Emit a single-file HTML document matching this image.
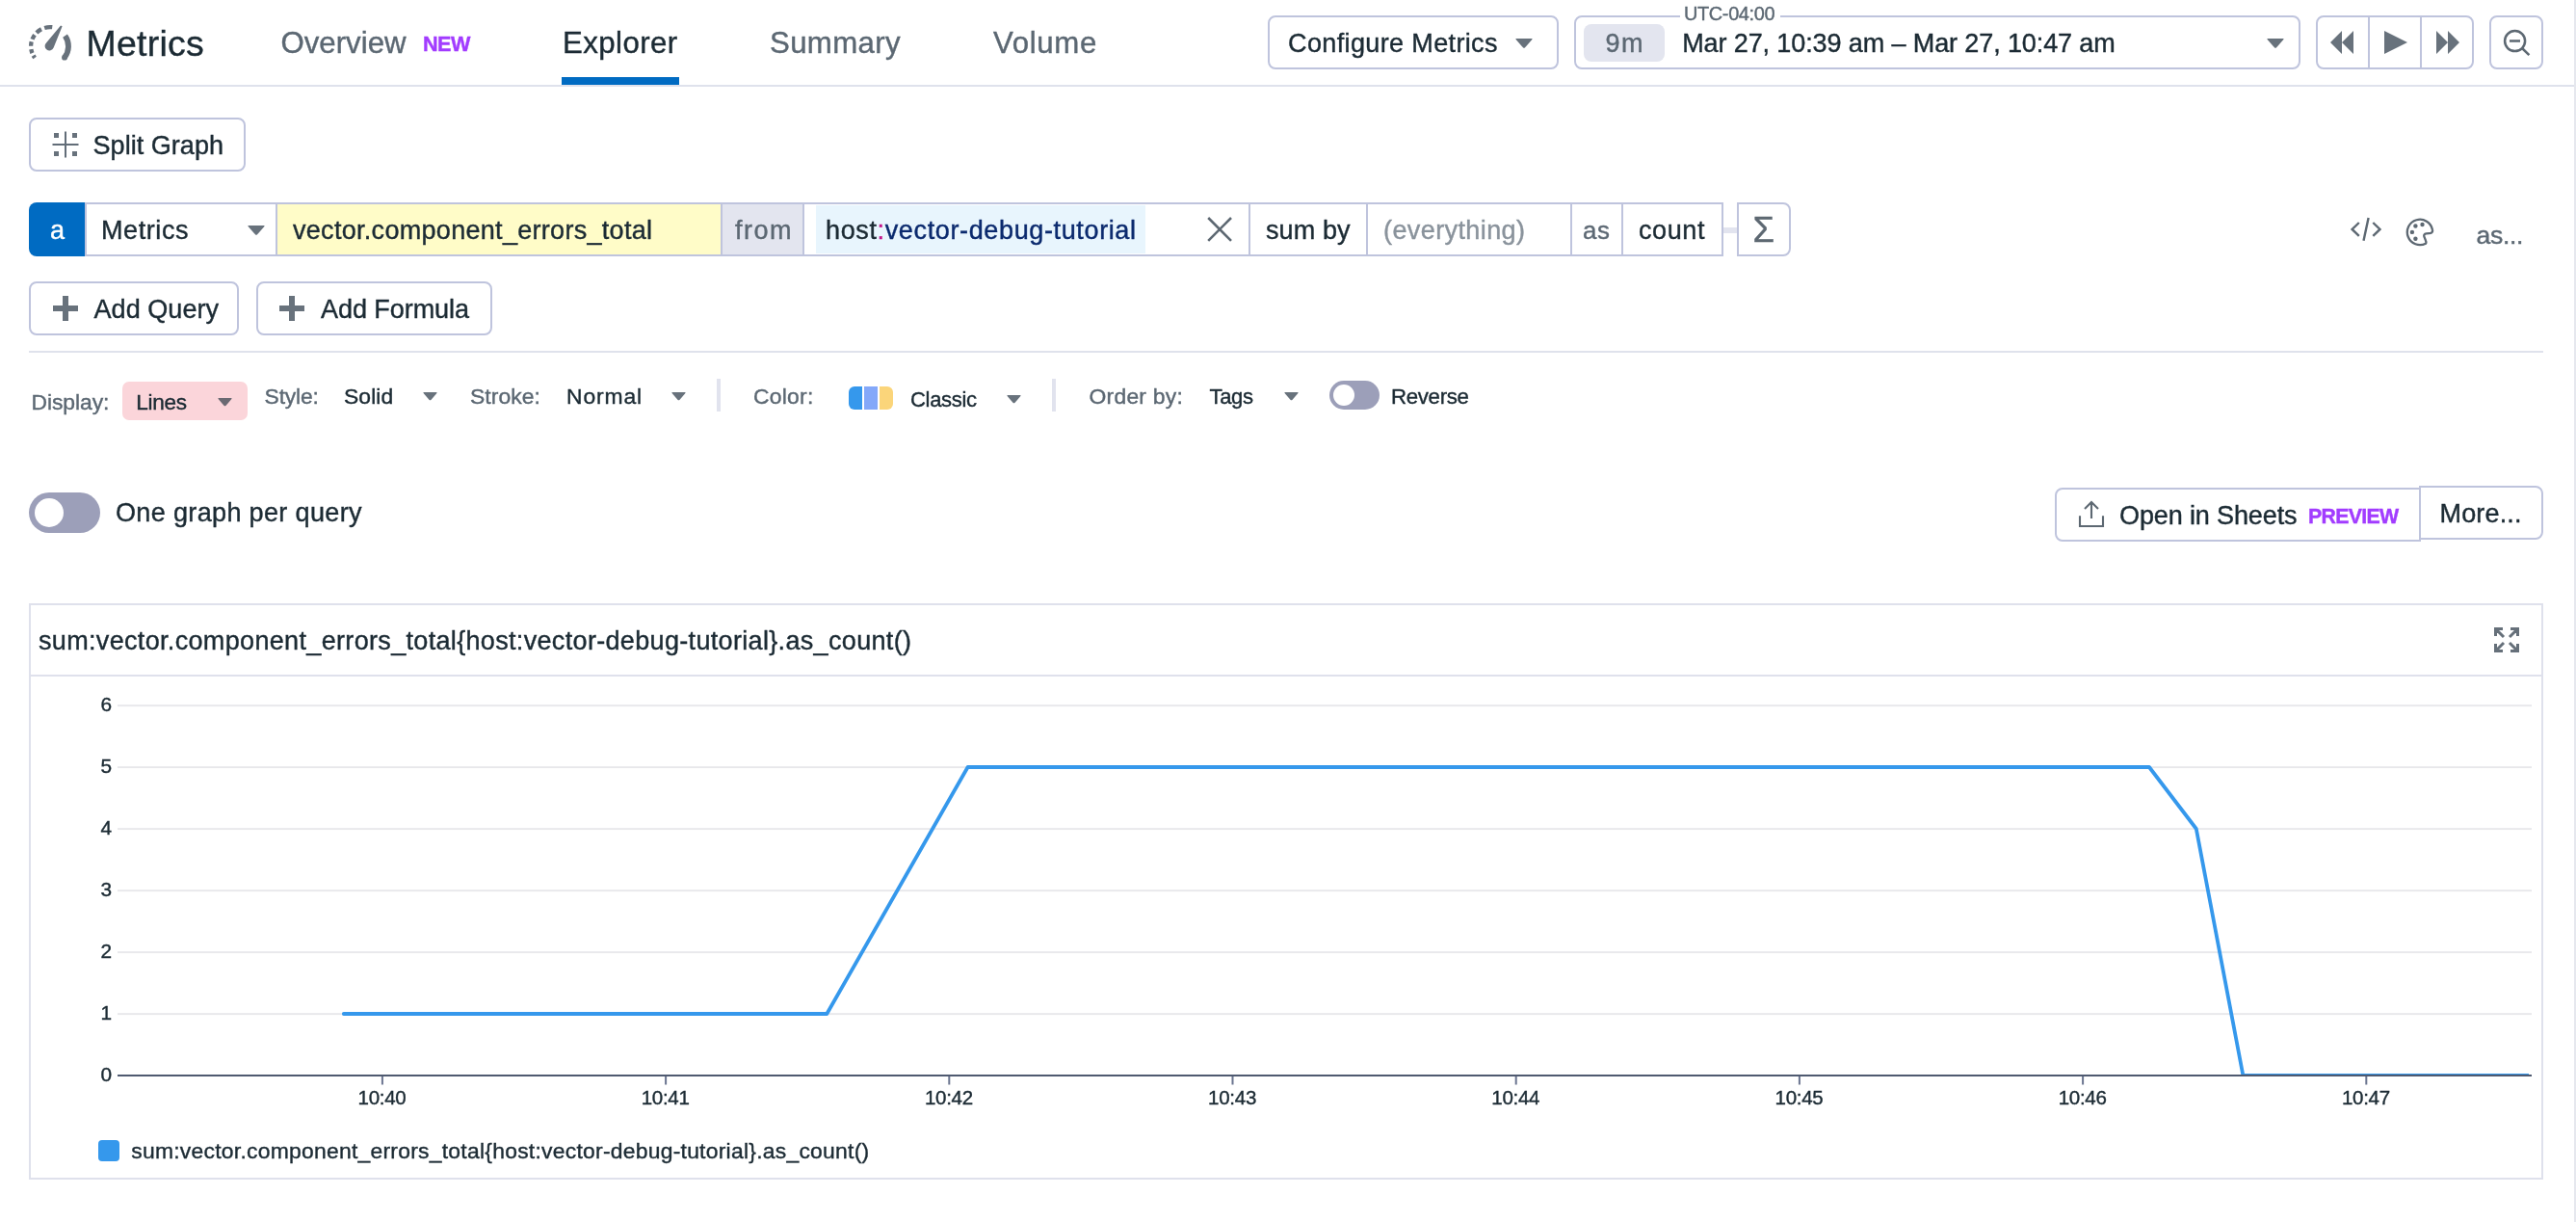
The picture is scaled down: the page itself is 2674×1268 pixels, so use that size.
<!DOCTYPE html>
<html lang="en"><head><meta charset="utf-8"><title>Metrics Explorer</title>
<style>
html,body{margin:0;padding:0;background:#fff}
body{width:2674px;height:1268px;position:relative;overflow:hidden;background:transparent;will-change:transform;font-family:"Liberation Sans",sans-serif;color:#1c2b34}
.t{position:absolute;white-space:pre;line-height:1;-webkit-text-stroke:0.4px;margin:0;padding:0;font-weight:400;font-style:normal;text-decoration:none}
.b{position:absolute;box-sizing:border-box}
.i{position:absolute;overflow:visible}
.btn{border:2px solid #bfc4dd;border-radius:8px;background:#fff}
@media (max-width:1400px){body{zoom:.5}}
</style></head><body>
<div class="b" style="left:2672px;top:0px;width:2px;height:1268px;background:#e6e8ee"></div>
<header>
<div class="b" style="left:0px;top:88px;width:2672px;height:2px;background:#dfe2ec"></div>
<svg class="i" style="left:0;top:0" width="110" height="90" viewBox="0 0 110 90"><g fill="none" stroke="#68727c"><path d="M36.11 59.98A19.9 19.9 0 0 1 34.60 57.65" stroke-width="4.3"/><path d="M33.42 55.13A19.9 19.9 0 0 1 32.35 51.11" stroke-width="4.3"/><path d="M32.10 47.83A19.9 19.9 0 0 1 32.65 43.35" stroke-width="4.3"/><path d="M33.48 40.71A19.9 19.9 0 0 1 36.00 36.16" stroke-width="4.3"/><path d="M37.93 33.93A19.9 19.9 0 0 1 42.97 30.27" stroke-width="4.3"/><path d="M46.18 28.97A19.9 19.9 0 0 1 54.25 28.23" stroke-width="4.3"/><path d="M67.56 37.10A19 19 0 0 1 66.97 59.70" stroke-width="5.8"/></g><circle cx="66.97" cy="59.70" r="2.9" fill="#68727c"/><path d="M64.6 27.2L63 26.6L48.2 44.2A4.7 4.7 0 1 0 55.6 49.6Z" fill="#68727c"/></svg>
<h1 class="t" style="left:89.50px;top:27.00px;font-size:37.44px;color:#1c2b34;letter-spacing:0.272px">Metrics</h1>
<nav>
<a class="t" style="left:291.50px;top:29.00px;font-size:31.20px;color:#5c6873;letter-spacing:0.007px">Overview</a>
<em class="t" style="left:439.00px;top:34.50px;font-size:21.63px;color:#a23cff;letter-spacing:-0.520px;font-weight:700">NEW</em>
<a class="t" style="left:584.00px;top:29.00px;font-size:31.20px;color:#1c2b34;letter-spacing:0.429px">Explorer</a>
<a class="t" style="left:799.00px;top:29.00px;font-size:31.20px;color:#5c6873;letter-spacing:0.361px">Summary</a>
<a class="t" style="left:1031.00px;top:29.00px;font-size:31.20px;color:#5c6873;letter-spacing:0.664px">Volume</a>
<div class="b" style="left:583px;top:80px;width:122px;height:8px;background:#006bc2"></div>
</nav>
<div class="b btn" style="left:1316px;top:16px;width:302px;height:56px;"></div>
<span class="t" style="left:1337.00px;top:32.00px;font-size:27.04px;color:#1c2b34;letter-spacing:0.356px">Configure Metrics</span>
<svg class="i" style="left:1573px;top:40px" width="18" height="10" viewBox="0 0 18 10"><path d="M1 0H17Q18 0 17.4 0.9L9.9 9.5Q9.0 10 8.1 9.5L0.6 0.9Q0 0 1 0Z" fill="#68727c"/></svg>
<div class="b btn" style="left:1634px;top:16px;width:754px;height:56px;"></div>
<div class="b" style="left:1744px;top:14px;width:104px;height:6px;background:#fff"></div>
<div class="b" style="left:1644px;top:24.6px;width:84px;height:39.2px;background:#e3e5ef;border-radius:8px"></div>
<span class="t" style="left:1666.50px;top:31.75px;font-size:27.04px;color:#5c6873;letter-spacing:1.467px">9m</span>
<small class="t" style="left:1748.00px;top:5.00px;font-size:19.92px;color:#5c6873;letter-spacing:-0.348px">UTC-04:00</small>
<span class="t" style="left:1746.20px;top:32.00px;font-size:27.04px;color:#1c2b34;letter-spacing:-0.122px">Mar 27, 10:39 am – Mar 27, 10:47 am</span>
<svg class="i" style="left:2353px;top:40px" width="18" height="10" viewBox="0 0 18 10"><path d="M1 0H17Q18 0 17.4 0.9L9.9 9.5Q9.0 10 8.1 9.5L0.6 0.9Q0 0 1 0Z" fill="#68727c"/></svg>
<div class="b btn" style="left:2404px;top:16px;width:164px;height:56px;"></div>
<div class="b" style="left:2458px;top:18px;width:2px;height:52px;background:#bfc4dd"></div>
<div class="b" style="left:2512px;top:18px;width:2px;height:52px;background:#bfc4dd"></div>
<svg class="i" style="left:2404px;top:16px" width="164" height="56" viewBox="2404 16 164 56" fill="#68727c"><path d="M2419 44L2431 32V56ZM2431 44L2443 32V56Z"/><path d="M2475 32L2499 44L2475 56Z"/><path d="M2529 32L2541 44L2529 56ZM2541 32L2553 44L2541 56Z"/></svg>
<div class="b btn" style="left:2584px;top:16px;width:56px;height:56px;"></div>
<svg class="i" style="left:2584px;top:16px" width="56" height="56" viewBox="2584 16 56 56" fill="none" stroke="#5d6872" stroke-width="2.5"><circle cx="2610.6" cy="42.6" r="10.5"/><path d="M2605 42.5H2616M2618 50L2625.4 57.2" stroke-linecap="butt"/></svg>
</header>
<main>
<div class="b btn" style="left:30px;top:122px;width:225px;height:56px;"></div>
<svg class="i" style="left:54px;top:136px" width="28" height="28" viewBox="54 136 28 28" fill="#68727c"><rect x="67" y="136.5" width="2" height="27" fill="#626d78"/><rect x="54.5" y="149" width="27" height="2" fill="#626d78"/><rect x="56" y="138" width="5" height="5"/><rect x="75" y="138" width="5" height="5"/><rect x="56" y="157" width="5" height="5"/><rect x="75" y="157" width="5" height="5"/></svg>
<span class="t" style="left:96.50px;top:138.00px;font-size:27.04px;color:#1c2b34;letter-spacing:0.031px">Split Graph</span>
<section>
<div class="b" style="left:88px;top:210px;width:1701px;height:56px;border:2px solid #bfc4dd;background:#fff"></div>
<div class="b" style="left:30px;top:210px;width:58px;height:56px;background:#006bc2;border-radius:8px 0 0 8px"></div>
<span class="t" style="left:52.00px;top:226.00px;font-size:27.04px;color:#ffffff">a</span>
<span class="t" style="left:105.00px;top:226.00px;font-size:27.04px;color:#1c2b34;letter-spacing:0.569px">Metrics</span>
<svg class="i" style="left:257px;top:234px" width="18" height="10" viewBox="0 0 18 10"><path d="M1 0H17Q18 0 17.4 0.9L9.9 9.5Q9.0 10 8.1 9.5L0.6 0.9Q0 0 1 0Z" fill="#68727c"/></svg>
<div class="b" style="left:288px;top:212px;width:460px;height:52px;background:#fffcc8"></div>
<span class="t" style="left:304.00px;top:226.00px;font-size:27.04px;color:#1c2b34;letter-spacing:0.282px">vector.component_errors_total</span>
<div class="b" style="left:750px;top:212px;width:83px;height:52px;background:#e3e5ef"></div>
<span class="t" style="left:763.00px;top:226.00px;font-size:27.04px;color:#5c6873;letter-spacing:1.485px">from</span>
<div class="b" style="left:847px;top:213px;width:342px;height:50px;background:#e8f5fd"></div>
<span class="t" style="left:857.00px;top:226.00px;font-size:27.04px;color:#1c2b34;letter-spacing:0.620px">host<span style="color:#c4168c">:</span><span style="color:#0b2a6e">vector-debug-tutorial</span></span>
<div class="b" style="left:286px;top:212px;width:2px;height:52px;background:#bfc4dd"></div>
<div class="b" style="left:748px;top:212px;width:2px;height:52px;background:#bfc4dd"></div>
<div class="b" style="left:833px;top:212px;width:2px;height:52px;background:#bfc4dd"></div>
<div class="b" style="left:1296px;top:212px;width:2px;height:52px;background:#bfc4dd"></div>
<div class="b" style="left:1418px;top:212px;width:2px;height:52px;background:#bfc4dd"></div>
<div class="b" style="left:1630px;top:212px;width:2px;height:52px;background:#bfc4dd"></div>
<div class="b" style="left:1683px;top:212px;width:2px;height:52px;background:#bfc4dd"></div>
<svg class="i" style="left:1253px;top:225px" width="26" height="26" viewBox="1253 225 26 26" stroke="#5d6872" stroke-width="2.6"><path d="M1254.2 226L1278 249.8M1278 226L1254.2 249.8"/></svg>
<span class="t" style="left:1314.00px;top:226.00px;font-size:27.04px;color:#1c2b34;letter-spacing:0.078px">sum by</span>
<span class="t" style="left:1436.00px;top:226.00px;font-size:27.04px;color:#8a939c;letter-spacing:0.389px">(everything)</span>
<span class="t" style="left:1643.00px;top:227.00px;font-size:25.89px;color:#5c6873;letter-spacing:0.610px">as</span>
<span class="t" style="left:1701.00px;top:226.00px;font-size:27.04px;color:#1c2b34;letter-spacing:0.596px">count</span>
<div class="b" style="left:1789px;top:236px;width:14px;height:6px;background:#e2e4ef"></div>
<div class="b" style="left:1803px;top:210px;width:56px;height:56px;border:2px solid #bfc4dd;border-radius:0 8px 8px 0;background:#fff"></div>
<span class="t" style="left:1819.50px;top:220.50px;font-size:36.40px;color:#5d6872">Σ</span>
<svg class="i" style="left:2440px;top:224px" width="34" height="28" viewBox="2440 224 34 28" fill="none" stroke="#5d6872" stroke-width="2.4"><path d="M2448.8 231L2441.6 237.9L2448.8 244.9M2458.6 226L2453.5 249.8M2463.3 231L2470.5 237.9L2463.3 244.9"/></svg>
<svg class="i" style="left:2496px;top:224px" width="34" height="34" viewBox="-16 -16.9 34 34"><path d="M6.0 11.8A13.2 13.2 0 1 1 13.0 -2.4C13.6 0.2 11.5 1.2 9.5 1.2L6.5 1.4C4.5 1.6 3.8 3.2 4.5 5L6 8.8C6.6 10.2 6.6 11 6.0 11.8Z" fill="none" stroke="#5d6872" stroke-width="2.3" stroke-linejoin="round"/><g fill="#5d6872"><circle cx="2.5" cy="-7.9" r="2.2"/><circle cx="-4.6" cy="-6.4" r="2.2"/><circle cx="-8.1" cy="0" r="2.2"/><circle cx="-4.6" cy="6.8" r="2.2"/></g></svg>
<span class="t" style="left:2570.50px;top:231.00px;font-size:26.56px;color:#5c6873;letter-spacing:-0.322px">as...</span>
</section>
<div class="b btn" style="left:30px;top:292px;width:218px;height:56px;"></div>
<div class="b btn" style="left:266px;top:292px;width:245px;height:56px;"></div>
<svg class="i" style="left:55px;top:307px" width="26" height="26" viewBox="0 0 26 26" fill="#68727c"><rect x="10" y="0" width="6" height="26"/><rect x="0" y="10" width="26" height="6"/></svg>
<svg class="i" style="left:290px;top:307px" width="26" height="26" viewBox="0 0 26 26" fill="#68727c"><rect x="10" y="0" width="6" height="26"/><rect x="0" y="10" width="26" height="6"/></svg>
<span class="t" style="left:97.50px;top:308.00px;font-size:27.04px;color:#1c2b34;letter-spacing:0.037px">Add Query</span>
<span class="t" style="left:333.00px;top:308.00px;font-size:27.04px;color:#1c2b34;letter-spacing:-0.071px">Add Formula</span>
<div class="b" style="left:30px;top:364px;width:2610px;height:2px;background:#dfe2ec"></div>
<section>
<label class="t" style="left:32.50px;top:405.50px;font-size:22.88px;color:#5c6873;letter-spacing:-0.072px">Display:</label>
<div class="b" style="left:127px;top:396px;width:130px;height:40px;background:#fbd5da;border-radius:7px"></div>
<span class="t" style="left:141.25px;top:406.50px;font-size:22.56px;color:#1c2b34;letter-spacing:-0.282px">Lines</span>
<svg class="i" style="left:225.5px;top:412.75px" width="15" height="8.5" viewBox="0 0 15 8.5"><path d="M1 0H14Q15 0 14.4 0.9L8.4 8.0Q7.5 8.5 6.6 8.0L0.6 0.9Q0 0 1 0Z" fill="#6b6972"/></svg>
<label class="t" style="left:274.60px;top:400.00px;font-size:22.88px;color:#5c6873;letter-spacing:-0.191px">Style:</label>
<span class="t" style="left:357.00px;top:400.00px;font-size:22.88px;color:#1c2b34;letter-spacing:0.089px">Solid</span>
<svg class="i" style="left:439px;top:407px" width="15" height="8.5" viewBox="0 0 15 8.5"><path d="M1 0H14Q15 0 14.4 0.9L8.4 8.0Q7.5 8.5 6.6 8.0L0.6 0.9Q0 0 1 0Z" fill="#68727c"/></svg>
<label class="t" style="left:488.00px;top:400.00px;font-size:22.88px;color:#5c6873;letter-spacing:0.065px">Stroke:</label>
<span class="t" style="left:588.00px;top:400.00px;font-size:22.88px;color:#1c2b34;letter-spacing:0.873px">Normal</span>
<svg class="i" style="left:696.5px;top:407px" width="15" height="8.5" viewBox="0 0 15 8.5"><path d="M1 0H14Q15 0 14.4 0.9L8.4 8.0Q7.5 8.5 6.6 8.0L0.6 0.9Q0 0 1 0Z" fill="#68727c"/></svg>
<div class="b" style="left:744px;top:393px;width:4px;height:34px;background:#e1e3ee"></div>
<label class="t" style="left:782.00px;top:400.00px;font-size:22.88px;color:#5c6873;letter-spacing:0.267px">Color:</label>
<div class="b" style="left:881px;top:401px;width:14px;height:24px;background:#3598ec;border-radius:6px 0 0 6px"></div>
<div class="b" style="left:897.25px;top:401px;width:13.5px;height:24px;background:#84a8f9"></div>
<div class="b" style="left:913.25px;top:401px;width:13.75px;height:24px;background:#fbd57a;border-radius:0 6px 6px 0"></div>
<span class="t" style="left:945.00px;top:403.75px;font-size:22.06px;color:#1c2b34;letter-spacing:-0.338px">Classic</span>
<svg class="i" style="left:1044.5px;top:409.5px" width="15" height="8.5" viewBox="0 0 15 8.5"><path d="M1 0H14Q15 0 14.4 0.9L8.4 8.0Q7.5 8.5 6.6 8.0L0.6 0.9Q0 0 1 0Z" fill="#68727c"/></svg>
<div class="b" style="left:1092px;top:393px;width:4px;height:34px;background:#e1e3ee"></div>
<label class="t" style="left:1130.50px;top:400.00px;font-size:22.88px;color:#5c6873;letter-spacing:0.252px">Order by:</label>
<span class="t" style="left:1255.50px;top:401.00px;font-size:22.04px;color:#1c2b34;letter-spacing:-0.340px">Tags</span>
<svg class="i" style="left:1332.5px;top:407px" width="15" height="8.5" viewBox="0 0 15 8.5"><path d="M1 0H14Q15 0 14.4 0.9L8.4 8.0Q7.5 8.5 6.6 8.0L0.6 0.9Q0 0 1 0Z" fill="#68727c"/></svg>
<div class="b" style="left:1380px;top:395px;width:52px;height:30px;background:#9c9fb9;border-radius:15px"></div>
<div class="b" style="left:1384px;top:399px;width:22px;height:22px;background:#fff;border-radius:11px"></div>
<label class="t" style="left:1444.00px;top:401.00px;font-size:22.25px;color:#1c2b34;letter-spacing:-0.329px">Reverse</label>
</section>
<div class="b" style="left:30px;top:511px;width:74px;height:42px;background:#9c9fb9;border-radius:21px"></div>
<div class="b" style="left:36px;top:517px;width:30px;height:30px;background:#fff;border-radius:15px"></div>
<label class="t" style="left:120.00px;top:519.00px;font-size:27.04px;color:#1c2b34;letter-spacing:0.337px">One graph per query</label>
<div class="b" style="left:2133px;top:506px;width:380px;height:56px;border:2px solid #bfc4dd;border-radius:8px 0 0 8px;background:#fff"></div>
<div class="b" style="left:2511px;top:504px;width:129px;height:56px;border:2px solid #bfc4dd;border-radius:0 8px 8px 0;background:#fff"></div>
<svg class="i" style="left:2156px;top:518px" width="30" height="30" viewBox="2156 518 30 30" fill="none" stroke="#5d6872" stroke-width="2.1"><path d="M2159 535.2V546H2183V535.2M2171 537.9V520.5M2164 528L2171 521L2178 528"/></svg>
<span class="t" style="left:2200.00px;top:521.75px;font-size:27.04px;color:#1c2b34;letter-spacing:-0.140px">Open in Sheets</span>
<em class="t" style="left:2396.00px;top:526.00px;font-size:21.34px;color:#a23cff;letter-spacing:-0.705px;font-weight:700">PREVIEW</em>
<span class="t" style="left:2532.50px;top:520.00px;font-size:27.04px;color:#1c2b34;letter-spacing:0.149px">More...</span>
<section>
<div class="b" style="left:30px;top:626px;width:2610px;height:598px;border:2px solid #dfe1ec;background:#fff"></div>
<div class="b" style="left:32px;top:700px;width:2606px;height:2px;background:#dfe1ec"></div>
<h2 class="t" style="left:40.00px;top:651.75px;font-size:27.04px;color:#1c2b34;letter-spacing:0.317px">sum:vector.component_errors_total{host:vector-debug-tutorial}.as_count()</h2>
<svg class="i" style="left:2589px;top:651px" width="26" height="26" viewBox="0 0 26 26" fill="none" stroke="#66707a" stroke-width="3"><path d="M9 1.5H1.5V9M1.5 1.5L10 10M17 1.5H24.5V9M24.5 1.5L16 10M9 24.5H1.5V17M1.5 24.5L10 16M17 24.5H24.5V17M24.5 24.5L16 16"/></svg>
<svg class="i" style="left:0;top:702px" width="2672" height="520" viewBox="0 702 2672 520"><rect x="122" y="1051.20" width="2506" height="1.9" fill="#e8e8eb"/><rect x="122" y="987.20" width="2506" height="1.9" fill="#e8e8eb"/><rect x="122" y="923.20" width="2506" height="1.9" fill="#e8e8eb"/><rect x="122" y="859.20" width="2506" height="1.9" fill="#e8e8eb"/><rect x="122" y="795.20" width="2506" height="1.9" fill="#e8e8eb"/><rect x="122" y="731.20" width="2506" height="1.9" fill="#e8e8eb"/><defs><clipPath id="plotclip"><rect x="122" y="702" width="2503" height="415"/></clipPath></defs><polyline clip-path="url(#plotclip)" fill="none" stroke="#3598ec" stroke-width="3.8" stroke-linecap="round" stroke-linejoin="round" points="356.8,1052 858.3,1052 1004.6,796 2231,796 2279.8,860 2328.4,1116 2630,1116"/><rect x="122" y="1115" width="2506" height="2" fill="#4f5a70"/><rect x="395.9" y="1117" width="2" height="8.5" fill="#6b7590"/><rect x="690.1" y="1117" width="2" height="8.5" fill="#6b7590"/><rect x="984.3" y="1117" width="2" height="8.5" fill="#6b7590"/><rect x="1278.5" y="1117" width="2" height="8.5" fill="#6b7590"/><rect x="1572.7" y="1117" width="2" height="8.5" fill="#6b7590"/><rect x="1866.9" y="1117" width="2" height="8.5" fill="#6b7590"/><rect x="2161.1" y="1117" width="2" height="8.5" fill="#6b7590"/><rect x="2455.3" y="1117" width="2" height="8.5" fill="#6b7590"/></svg>
<span class="t" style="left:104.50px;top:1105.35px;font-size:20.80px;color:#1c2b34">0</span>
<span class="t" style="left:104.50px;top:1041.35px;font-size:20.80px;color:#1c2b34">1</span>
<span class="t" style="left:104.50px;top:977.35px;font-size:20.80px;color:#1c2b34">2</span>
<span class="t" style="left:104.50px;top:913.35px;font-size:20.80px;color:#1c2b34">3</span>
<span class="t" style="left:104.50px;top:849.35px;font-size:20.80px;color:#1c2b34">4</span>
<span class="t" style="left:104.50px;top:785.35px;font-size:20.80px;color:#1c2b34">5</span>
<span class="t" style="left:104.50px;top:721.35px;font-size:20.80px;color:#1c2b34">6</span>
<span class="t" style="left:371.50px;top:1129.00px;font-size:20.52px;color:#1c2b34;letter-spacing:-0.282px">10:40</span>
<span class="t" style="left:665.70px;top:1129.00px;font-size:20.52px;color:#1c2b34;letter-spacing:-0.282px">10:41</span>
<span class="t" style="left:959.90px;top:1129.00px;font-size:20.52px;color:#1c2b34;letter-spacing:-0.282px">10:42</span>
<span class="t" style="left:1254.10px;top:1129.00px;font-size:20.52px;color:#1c2b34;letter-spacing:-0.282px">10:43</span>
<span class="t" style="left:1548.30px;top:1129.00px;font-size:20.52px;color:#1c2b34;letter-spacing:-0.282px">10:44</span>
<span class="t" style="left:1842.50px;top:1129.00px;font-size:20.52px;color:#1c2b34;letter-spacing:-0.282px">10:45</span>
<span class="t" style="left:2136.70px;top:1129.00px;font-size:20.52px;color:#1c2b34;letter-spacing:-0.282px">10:46</span>
<span class="t" style="left:2430.90px;top:1129.00px;font-size:20.52px;color:#1c2b34;letter-spacing:-0.282px">10:47</span>
<div class="b" style="left:102px;top:1183px;width:22px;height:22px;background:#3598ec;border-radius:4px"></div>
<span class="t" style="left:136.25px;top:1182.75px;font-size:22.88px;color:#1c2b34;letter-spacing:0.257px">sum:vector.component_errors_total{host:vector-debug-tutorial}.as_count()</span>
</section>
</main>
</body></html>
